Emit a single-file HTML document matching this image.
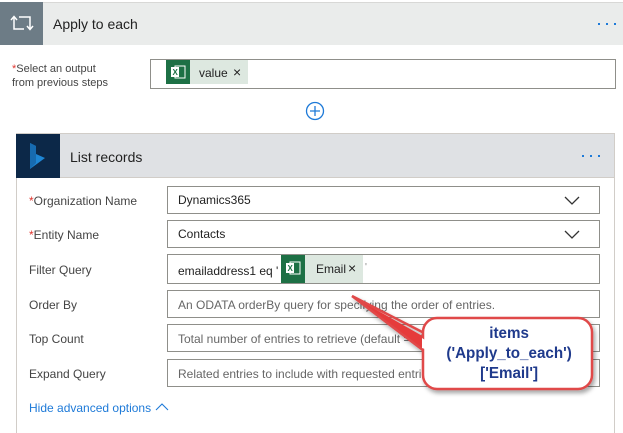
<!DOCTYPE html>
<html><head><meta charset="utf-8"><style>
*{box-sizing:border-box;margin:0;padding:0}
body{width:623px;height:428px;background:#fff;font-family:"Liberation Sans",sans-serif;position:relative;overflow:hidden;color:#222}
.abs{position:absolute}
.box{position:absolute;border:1px solid #8f8f8a;background:#fff}
.lbl{position:absolute;font-size:12px;color:#444}
.red{color:#e0362f}
.ph{position:absolute;font-size:12px;color:#666;left:10px;top:7px;white-space:nowrap}
.val{position:absolute;font-size:12px;color:#222;left:10px;top:6px}
</style></head><body>
<div class="abs" style="left:0;top:2px;width:623px;height:43px;background:#eaeceb;border-top:1px solid #d8d8d6"></div>
<div class="abs" style="left:0;top:2px;width:43px;height:43px;background:#6d7c86"></div>
<svg class="abs" style="left:10px;top:13px" width="24" height="20" viewBox="0 0 24 20" fill="none" stroke="#fff" stroke-width="1.5"><path d="M4 4V16H14"/><path d="M1 7L4 3.5L7 7"/><path d="M9 4H20V16"/><path d="M17 13L20 16.5L23 13"/></svg>
<div class="abs" style="left:53px;top:16px;font-size:14px;color:#222">Apply to each</div>
<svg class="abs" style="left:597px;top:22px" width="24" height="4"><rect x="1" y="1" width="2" height="2" fill="#1e7ad8"/><rect x="9" y="1" width="2" height="2" fill="#1e7ad8"/><rect x="17" y="1" width="2" height="2" fill="#1e7ad8"/></svg>
<div class="abs" style="left:12px;top:62px;font-size:11px;color:#444;line-height:14px"><span class="red">*</span>Select an output<br>from previous steps</div>
<div class="box" style="left:150px;top:59px;width:466px;height:30px"></div>
<div class="abs" style="left:166px;top:60px;width:82px;height:24px;background:#dde8e0"></div>
<div class="abs" style="left:166px;top:60px;width:24px;height:24px;background:#1d7045"></div>
<svg class="abs" style="left:170px;top:65px" width="16" height="14"><rect x="5" y="1" width="10" height="12" fill="none" stroke="#fff" stroke-width="1"/><rect x="1" y="2" width="8" height="10" fill="#fff"/><text x="2.5" y="10" font-size="8" fill="#1d7045" font-family="Liberation Sans" font-weight="bold">X</text></svg>
<div class="abs" style="left:199px;top:66px;font-size:12px">value</div>
<div class="abs" style="left:233px;top:64px;font-size:14px">×</div>
<svg class="abs" style="left:305px;top:101px" width="20" height="20"><circle cx="10" cy="10" r="8.5" fill="#fff" stroke="#1e7ad8" stroke-width="1.3"/><path d="M10 5V15M5 10H15" stroke="#1e7ad8" stroke-width="1.3"/></svg>
<div class="abs" style="left:16px;top:133px;width:599px;height:300px;border:1px solid #d1cdc8;border-bottom:none"></div>
<div class="abs" style="left:16px;top:133px;width:599px;height:45px;background:#dfe1e4;border:1px solid #d1cdc8"></div>
<div class="abs" style="left:16px;top:134px;width:44px;height:44px;background:#0c2848"></div>
<svg class="abs" style="left:28px;top:142px" width="20" height="28" viewBox="0 0 20 28"><path d="M2 1L8 4V12L17 16L2 27Z" fill="#1e86d4"/><path d="M2 1L8 4V21L2 27Z" fill="#176bb0"/></svg>
<div class="abs" style="left:70px;top:149px;font-size:14px;color:#222">List records</div>
<svg class="abs" style="left:582px;top:154px" width="24" height="4"><rect x="0" y="1" width="2" height="2" fill="#1e7ad8"/><rect x="8" y="1" width="2" height="2" fill="#1e7ad8"/><rect x="16" y="1" width="2" height="2" fill="#1e7ad8"/></svg>

<div class="lbl" style="left:29px;top:194px"><span class="red">*</span>Organization Name</div>
<div class="box" style="left:167px;top:186px;width:433px;height:28px"><div class="val">Dynamics365</div><svg class="abs" style="left:396px;top:9px" width="16" height="10"><path d="M1 1L8 8L15 1" fill="none" stroke="#333" stroke-width="1.3"/></svg></div>
<div class="lbl" style="left:29px;top:228px"><span class="red">*</span>Entity Name</div>
<div class="box" style="left:167px;top:220px;width:433px;height:28px"><div class="val">Contacts</div><svg class="abs" style="left:396px;top:9px" width="16" height="10"><path d="M1 1L8 8L15 1" fill="none" stroke="#333" stroke-width="1.3"/></svg></div>
<div class="lbl" style="left:29px;top:263px">Filter Query</div>
<div class="box" style="left:167px;top:254px;width:433px;height:30px"><div class="val" style="top:9px">emailaddress1 eq '</div></div>
<div class="abs" style="left:281px;top:255px;width:82px;height:28px;background:#dde8e0"></div>
<div class="abs" style="left:281px;top:255px;width:24px;height:28px;background:#1d7045"></div>
<svg class="abs" style="left:285px;top:261px" width="16" height="14"><rect x="5" y="1" width="10" height="12" fill="none" stroke="#fff" stroke-width="1"/><rect x="1" y="2" width="8" height="10" fill="#fff"/><text x="2.5" y="10" font-size="8" fill="#1d7045" font-family="Liberation Sans" font-weight="bold">X</text></svg>
<div class="abs" style="left:316px;top:262px;font-size:12px">Email</div>
<div class="abs" style="left:348px;top:260px;font-size:14px">×</div>
<div class="abs" style="left:365px;top:262px;font-size:10px;color:#888">'</div>
<div class="lbl" style="left:29px;top:298px">Order By</div>
<div class="box" style="left:167px;top:290px;width:433px;height:28px"><div class="ph">An ODATA orderBy query for specifying the order of entries.</div></div>
<div class="lbl" style="left:29px;top:332px">Top Count</div>
<div class="box" style="left:167px;top:324px;width:433px;height:28px"><div class="ph">Total number of entries to retrieve (default = all).</div></div>
<div class="lbl" style="left:29px;top:367px">Expand Query</div>
<div class="box" style="left:167px;top:359px;width:433px;height:28px"><div class="ph">Related entries to include with requested entries.</div></div>
<div class="abs" style="left:29px;top:401px;font-size:12px;color:#1e7ad8">Hide advanced options</div>
<svg class="abs" style="left:155px;top:402px" width="14" height="9"><path d="M1 8L7 2L13 8" fill="none" stroke="#1e7ad8" stroke-width="1.1"/></svg>
<svg class="abs" style="left:340px;top:290px" width="260" height="110">
<defs><filter id="s" x="-20%" y="-20%" width="140%" height="140%"><feDropShadow dx="2" dy="3" stdDeviation="2" flood-color="#000" flood-opacity="0.35"/></filter></defs>
<g filter="url(#s)">
<path d="M12 6L86 48L86 58L83 60Z" fill="#e63b3b"/>
<path d="M12 6L90 46" stroke="#e04848" stroke-width="2.5"/>
<path d="M12 6L88 64" stroke="#e04848" stroke-width="2.5"/>
<rect x="83" y="28" width="169" height="71" rx="14" fill="#fff" stroke="#e04848" stroke-width="2.5"/>
</g>
<path d="M82 48L88 52L88 60L82 58Z" fill="#fff"/>
<text font-family="Liberation Sans" font-weight="bold" font-size="16" fill="#1f3a8c" text-anchor="middle" transform="scale(0.95,1)"><tspan x="178" y="48">items</tspan><tspan x="178" y="68">('Apply_to_each')</tspan><tspan x="178" y="88">['Email']</tspan></text>
</svg>
</body></html>
